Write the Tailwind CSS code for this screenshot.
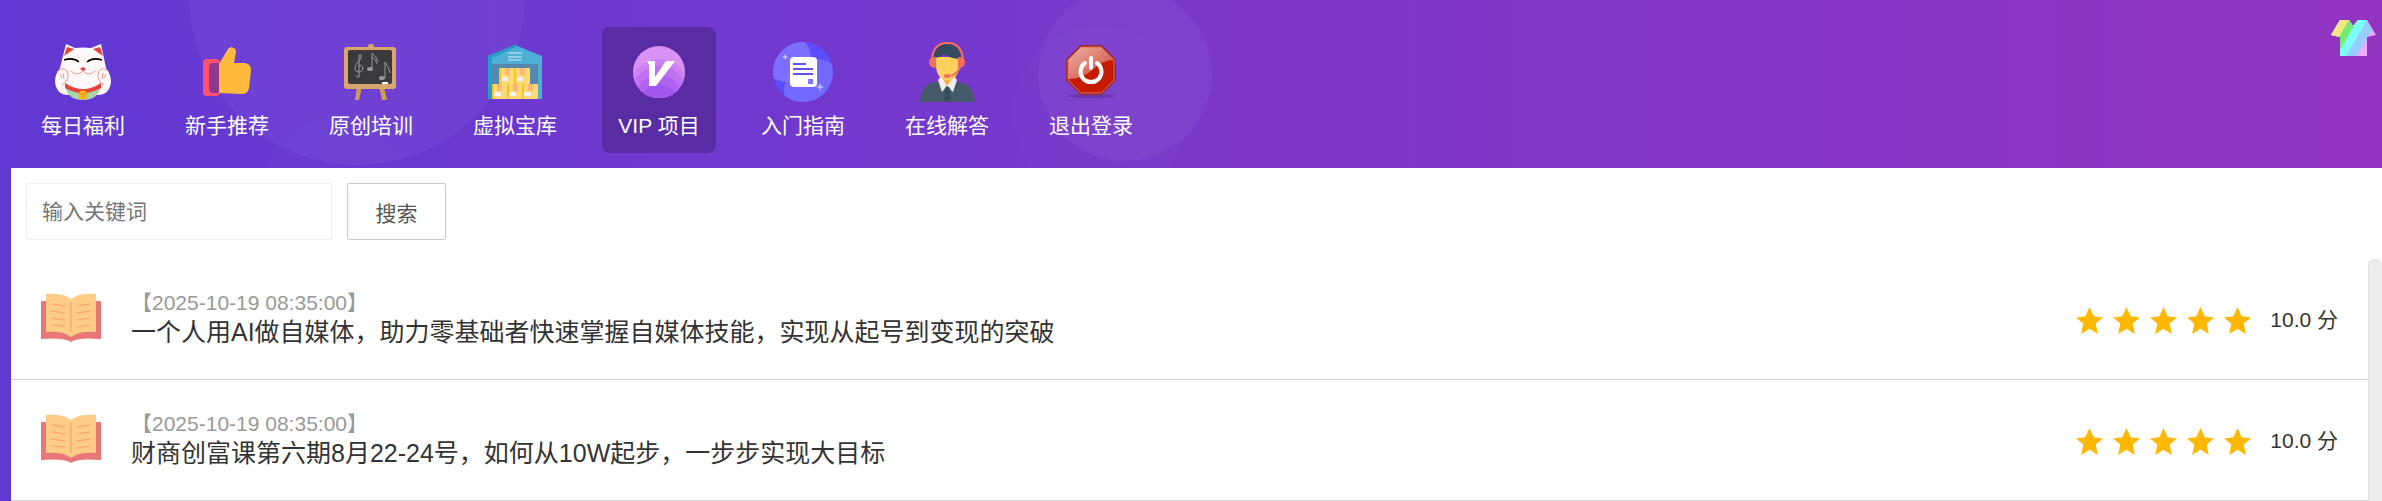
<!DOCTYPE html>
<html lang="zh-CN">
<head>
    <meta charset="UTF-8">
    <meta name="viewport" content="width=device-width, initial-scale=1.0">
    <script src="https://cdn.jsdelivr.net/npm/@tailwindcss/browser@4"></script>
    <title>VIP 项目</title>
</head>
<body class="min-h-screen flex flex-col bg-gradient-to-r from-[#6138d3] to-[#9234c2] font-['Liberation_Sans','Noto_Sans_CJK_SC',sans-serif] text-[21px] text-[#333]">
    <!--barra superior-->
    <header class="relative h-[168px] overflow-hidden flex items-start justify-between pl-[26px] pr-[6px]">
        <!--circulos de fondo-->
        <svg class="absolute top-0 left-0" width="1400" height="168" fill="#fff" fill-opacity=".045" aria-hidden="true">
            <circle cx="357" cy="-3" r="168"/>
            <circle cx="333" cy="187" r="69" fill-opacity=".01"/>
            <circle cx="1125" cy="74" r="87"/>
            <circle cx="1100" cy="112" r="87" fill-opacity=".01"/>
        </svg>

        <nav class="relative flex gap-[30px] pt-[27px] text-white leading-[30px]">
            <a href="#" class="w-[114px] h-[126px] pt-[15px] flex flex-col items-center gap-[9px] rounded-lg">
                <svg width="60" height="60" viewBox="0 0 60 60">
                    <path d="M13 2 7 26C5 29 2 33 2 40C3 49 8 53 15 53H45C52 53 57 49 58 40C58 33 55 29 53 26L48 2 38 6Q30 5 22 6Z" fill="#fff8f8"/>
                    <path d="M14 5 11 14 21 7ZM47 5 50 14 40 7Z" fill="#e8423c"/>
                    <path d="M12 43Q30 54 48 43Q46 58 30 58Q14 58 12 43Z" fill="#a9d3ae"/>
                    <path d="M12 41Q30 53 48 41V46Q30 56 12 46Z" fill="#e8423c"/>
                    <circle cx="30" cy="53" r="4.500" fill="#fbb917"/>
                    <path d="M26 52H34M30 53V57" stroke="#d98d10"/>
                    <path d="M11 18Q20 15 26 20M34 20Q40 15 49 18" fill="none" stroke="#000" stroke-width="1.500"/>
                    <path d="M27 27 30 25 33 27 30 29Z" fill="#e8423c"/>
                    <path d="M18 29Q24 35 30 29Q36 35 42 29M4 30Q10 24 14 29Q18 37 9 43M56 30Q50 24 46 29Q42 37 51 43M7 32 9 36M10 31 11 37M50 31 49 37M53 32 51 36" fill="none" stroke="#ee9790"/>
                </svg>
                每日福利
            </a>
            <a href="#" class="w-[114px] h-[126px] pt-[15px] flex flex-col items-center gap-[9px] rounded-lg">
                <svg width="60" height="60" viewBox="0 0 60 60">
                    <rect x="6" y="17" width="17" height="37" rx="4" fill="#ff526c"/>
                    <path d="M22 21H16Q12 21 12 26V46Q12 51 16 51H22Z" fill="#8f368f"/>
                    <path d="M22 22 31 7Q33 4 37 6Q39 7 39 10L37 21H48Q54 22 54 28L52 46Q51 52 45 52L22 51Z" fill="#ffb93b"/>
                </svg>
                新手推荐
            </a>
            <a href="#" class="w-[114px] h-[126px] pt-[15px] flex flex-col items-center gap-[9px] rounded-lg">
                <svg width="60" height="60" viewBox="0 0 60 60">
                    <path d="M16 45 14 58H18L21 45ZM38 45 41 58H46L43 45Z" fill="#d19a52"/>
                    <rect x="27" y="2" width="6" height="8" rx="2" fill="#d3a26a"/>
                    <rect x="3" y="5" width="52" height="42" rx="3" fill="#d9a76b"/>
                    <rect x="7" y="8" width="44" height="34" rx="2" fill="#3a3a3c"/>
                    <path d="M19 34Q16 37 15 33M18 35V16Q18 11 20 13Q21 17 17 20Q12 25 15 29Q21 32 22 26Q20 21 17 25M31 27V11Q36 15 37 20M31 15Q35 17 36 22M44 36V20Q48 25 49 31" fill="none" stroke="#999"/>
                    <ellipse cx="29" cy="27" rx="3" ry="2" fill="#999"/>
                    <ellipse cx="41" cy="36" rx="3" ry="2" fill="#999"/>
                    <rect x="41" y="40" width="6" height="2" fill="#fff"/>
                </svg>
                原创培训
            </a>
            <a href="#" class="w-[114px] h-[126px] pt-[15px] flex flex-col items-center gap-[9px] rounded-lg">
                <svg width="60" height="60" viewBox="0 0 60 60">
                    <path d="M3 14 30 3 57 14V57H3Z" fill="#4cafd3"/>
                    <path d="M3 14 30 3 33 4 7 16V57H3Z" fill="#239fc8"/>
                    <rect x="7" y="22" width="46" height="35" fill="#5488ae"/>
                    <path d="M23 11H37M23 15H37M23 18H37" stroke="#a5d8ea" stroke-width="1.500"/>
                    <path d="M15 26H45V42H53V57H7V42H15Z" fill="#ffd972"/>
                    <path d="M15 26V42M30 26V42M8 42V57M23 42V57M38 42V57" stroke="#fdc423" stroke-width="2"/>
                    <path d="M20 26H25V33H20ZM35 26H40V33H35ZM12 42H17V49H12ZM28 42H33V49H28ZM43 42H48V49H43Z" fill="#fdb578"/>
                    <path d="M17 35H23V39H17ZM32 35H38V39H32ZM9 50H16V54H9ZM24 50H31V54H24ZM39 50H46V54H39Z" fill="#f1f1f1"/>
                </svg>
                虚拟宝库
            </a>
            <a href="#" class="w-[114px] h-[126px] pt-[15px] flex flex-col items-center gap-[9px] rounded-lg bg-[#592ca4]" aria-current="page">
                <svg width="60" height="60" viewBox="0 0 60 60">
                    <defs><clipPath id="vip"><circle cx="30" cy="30" r="26"/></clipPath></defs>
                    <g clip-path="url(#vip)">
                        <rect width="60" height="60" fill="#da91f4"/>
                        <circle cx="30" cy="46" r="29" fill="#cd82f2"/>
                        <circle cx="30" cy="51" r="27" fill="#c071f1"/>
                        <circle cx="30" cy="56" r="23" fill="#ae62ef"/>
                        <circle cx="30" cy="61" r="19" fill="#a257ee"/>
                    </g>
                    <path d="M18 19H26V35L37 19H46L27 44H20V23Z" fill="#fff"/>
                </svg>
                VIP 项目
            </a>
            <a href="#" class="w-[114px] h-[126px] pt-[15px] flex flex-col items-center gap-[9px] rounded-lg">
                <svg width="60" height="60" viewBox="0 0 60 60">
                    <defs><clipPath id="guia"><circle cx="30" cy="30" r="30"/></clipPath></defs>
                    <g clip-path="url(#guia)">
                        <rect width="60" height="60" fill="#5b4dff"/>
                        <circle cx="14" cy="16" r="24" fill="#7c6fff"/>
                        <circle cx="42" cy="48" r="31" fill="#8278ff" fill-opacity=".65"/>
                    </g>
                    <rect x="17" y="15" width="27" height="30" rx="4" fill="#fff"/>
                    <path d="M20 22H33M20 27H40M20 32H40" stroke="#5e52ef" stroke-width="2"/>
                    <rect x="35" y="37" width="5" height="5" fill="#8177ff"/>
                    <path d="M12 12 13 14 15 15 13 16 12 18 11 16 9 15 11 14ZM47 41 48 44 51 45 48 46 47 49 46 46 43 45 46 44Z" fill="#c5c0ff"/>
                </svg>
                入门指南
            </a>
            <a href="#" class="w-[114px] h-[126px] pt-[15px] flex flex-col items-center gap-[9px] rounded-lg">
                <svg width="60" height="60" viewBox="0 0 60 60">
                    <path d="M3 60Q4 44 14 41L24 39H36L46 41Q56 44 58 60Z" fill="#455a68"/>
                    <path d="M25 34H36V40L30 48 25 40Z" fill="#fbb540"/>
                    <path d="M24 34 30 44 25 50 21 38ZM37 34 30 44 36 50 40 38Z" fill="#efefef"/>
                    <path d="M28 46 30 44 33 46 34 60H27Z" fill="#394f5e"/>
                    <path d="M19 15H42V25Q41 38 30 38Q20 37 19 25Z" fill="#ffd05b"/>
                    <path d="M16 17Q17 2 30 2Q43 2 44 17Q34 17 27 12Q23 16 16 16Z" fill="#344a5e"/>
                    <path d="M15 18Q16 1 30 1Q45 1 46 18M43 25Q40 34 30 34" fill="none" stroke="#f1705c" stroke-width="2"/>
                    <path d="M19 15V26Q12 26 12 20Q12 15 19 15ZM41 15V26Q48 26 48 20Q48 15 41 15Z" fill="#f1705c"/>
                    <ellipse cx="30" cy="34" rx="3" ry="2" fill="#f1705c"/>
                    <circle cx="30" cy="50" r="1" fill="#22394a"/><circle cx="30" cy="56" r="1" fill="#22394a"/>
                </svg>
                在线解答
            </a>
            <a href="#" class="w-[114px] h-[126px] pt-[15px] flex flex-col items-center gap-[9px] rounded-lg">
                <svg width="60" height="60" viewBox="0 0 60 60">
                    <defs><linearGradient id="brillo" x2="1" y2="1"><stop stop-color="#eeb5ab"/><stop offset="1" stop-color="#cc432b"/></linearGradient></defs>
                    <ellipse cx="30" cy="54" rx="23" ry="2" fill="#50247f" fill-opacity=".4"/>
                    <path d="M20 4H40L54 18V38L40 52H20L6 38V18Z" fill="#c71b00" stroke="#9c2930" stroke-width="2"/>
                    <path d="M20 5H40L53 18Q42 18 32 27Q22 37 7 37V18Z" fill="url(#brillo)"/>
                    <path d="M20 5H40L53 18V38L40 51H20L7 38V18Z" fill="none" stroke="#d96b57"/>
                    <path d="M30 16V26M24 21A10.500 10.500 0 1 0 36 21" fill="none" stroke="#fff" stroke-width="4" stroke-linecap="round"/>
                </svg>
                退出登录
            </a>
        </nav>

        <!--cambio de tema-->
        <button type="button" aria-label="换肤" class="relative mt-5">
            <svg width="45" height="36" viewBox="0 0 45 36">
                <defs><clipPath id="camisa"><path d="M9 0H18L22 6 27 0H36L45 15 36 17V36H9V17L0 15Z"/></clipPath></defs>
                <g clip-path="url(#camisa)">
                    <rect width="45" height="36" fill="#efacff"/>
                    <path d="M0 0H36L41 10 25 36H0Z" fill="#95ceff"/>
                    <path d="M0 0H36L15 36H0Z" fill="#7efff8"/>
                    <path d="M0 0H18L23 6 9 30H0Z" fill="#76ec72"/>
                    <path d="M0 0H18L8 17H0Z" fill="#f5e683"/>
                </g>
            </svg>
        </button>
    </header>

    <!--contenido-->
    <main class="flex-1 ml-[11px] bg-white flex flex-col">
        <form class="flex gap-[15px] pt-[15px] pl-[15px] mb-[19px]">
            <input type="text" aria-label="输入关键词" placeholder="输入关键词" autocomplete="off" class="w-[306px] h-[57px] px-[15px] border border-[#eee] rounded-xs placeholder:text-[#757575]">
            <button type="button" class="w-[99px] h-[57px] pt-1 border border-[#c9c9c9] rounded-xs text-[#555]">搜索</button>
        </form>

        <div class="flex-1 flex">
            <ul class="flex-1">
                <li class="flex items-center gap-[30px] p-[30px] border-b border-[#d2d2d2]">
                    <svg class="shrink-0" width="60" height="60" viewBox="0 0 60 60">
                        <path d="M0 12H60V50Q36 48 30 53Q24 48 0 50Z" fill="#e97777"/>
                        <path d="M5 5Q23 4 30 10Q37 4 55 5V43Q37 42 30 48Q23 42 5 43Z" fill="#fdcd88"/>
                        <path d="M30 13V43M11 15 24 17M11 22 24 24M11 29 24 31M11 36 24 37M49 15 36 17M49 22 36 24M49 29 36 31M49 36 36 38" stroke="#fbaa74" stroke-width="1.500"/>
                    </svg>
                    <div class="flex-1 pb-0.5">
                        <p class="leading-[28px] text-[#999]">【2025-10-19 08:35:00】</p>
                        <h2 class="text-[25px] leading-[30px]"><a href="#">一个人用AI做自媒体，助力零基础者快速掌握自媒体技能，实现从起号到变现的突破</a></h2>
                    </div>
                    <div class="flex items-center gap-[19px] pt-0.5">
                        <div class="flex gap-2.5">
                            <svg width="27" height="27" viewBox="0 0 26 26" fill="#ffb800"><path d="M13 0 17 9 26 10 19 16 21 26 13 21 5 26 7 16 0 10 9 9Z"/></svg>
                            <svg width="27" height="27" viewBox="0 0 26 26" fill="#ffb800"><path d="M13 0 17 9 26 10 19 16 21 26 13 21 5 26 7 16 0 10 9 9Z"/></svg>
                            <svg width="27" height="27" viewBox="0 0 26 26" fill="#ffb800"><path d="M13 0 17 9 26 10 19 16 21 26 13 21 5 26 7 16 0 10 9 9Z"/></svg>
                            <svg width="27" height="27" viewBox="0 0 26 26" fill="#ffb800"><path d="M13 0 17 9 26 10 19 16 21 26 13 21 5 26 7 16 0 10 9 9Z"/></svg>
                            <svg width="27" height="27" viewBox="0 0 26 26" fill="#ffb800"><path d="M13 0 17 9 26 10 19 16 21 26 13 21 5 26 7 16 0 10 9 9Z"/></svg>
                        </div>
                        <span>10.0 分</span>
                    </div>
                </li>
                <li class="flex items-center gap-[30px] p-[30px] border-b border-[#d2d2d2]">
                    <svg class="shrink-0" width="60" height="60" viewBox="0 0 60 60">
                        <path d="M0 12H60V50Q36 48 30 53Q24 48 0 50Z" fill="#e97777"/>
                        <path d="M5 5Q23 4 30 10Q37 4 55 5V43Q37 42 30 48Q23 42 5 43Z" fill="#fdcd88"/>
                        <path d="M30 13V43M11 15 24 17M11 22 24 24M11 29 24 31M11 36 24 37M49 15 36 17M49 22 36 24M49 29 36 31M49 36 36 38" stroke="#fbaa74" stroke-width="1.500"/>
                    </svg>
                    <div class="flex-1 pb-0.5">
                        <p class="leading-[28px] text-[#999]">【2025-10-19 08:35:00】</p>
                        <h2 class="text-[25px] leading-[30px]"><a href="#">财商创富课第六期8月22-24号，如何从10W起步，一步步实现大目标</a></h2>
                    </div>
                    <div class="flex items-center gap-[19px] pt-0.5">
                        <div class="flex gap-2.5">
                            <svg width="27" height="27" viewBox="0 0 26 26" fill="#ffb800"><path d="M13 0 17 9 26 10 19 16 21 26 13 21 5 26 7 16 0 10 9 9Z"/></svg>
                            <svg width="27" height="27" viewBox="0 0 26 26" fill="#ffb800"><path d="M13 0 17 9 26 10 19 16 21 26 13 21 5 26 7 16 0 10 9 9Z"/></svg>
                            <svg width="27" height="27" viewBox="0 0 26 26" fill="#ffb800"><path d="M13 0 17 9 26 10 19 16 21 26 13 21 5 26 7 16 0 10 9 9Z"/></svg>
                            <svg width="27" height="27" viewBox="0 0 26 26" fill="#ffb800"><path d="M13 0 17 9 26 10 19 16 21 26 13 21 5 26 7 16 0 10 9 9Z"/></svg>
                            <svg width="27" height="27" viewBox="0 0 26 26" fill="#ffb800"><path d="M13 0 17 9 26 10 19 16 21 26 13 21 5 26 7 16 0 10 9 9Z"/></svg>
                        </div>
                        <span>10.0 分</span>
                    </div>
                </li>
            </ul>
            <!--barra de desplazamiento-->
            <div class="w-[14px] rounded-t-full bg-[#ececec] border-l border-t border-[#ddd]"></div>
        </div>
    </main>
</body>
</html>
